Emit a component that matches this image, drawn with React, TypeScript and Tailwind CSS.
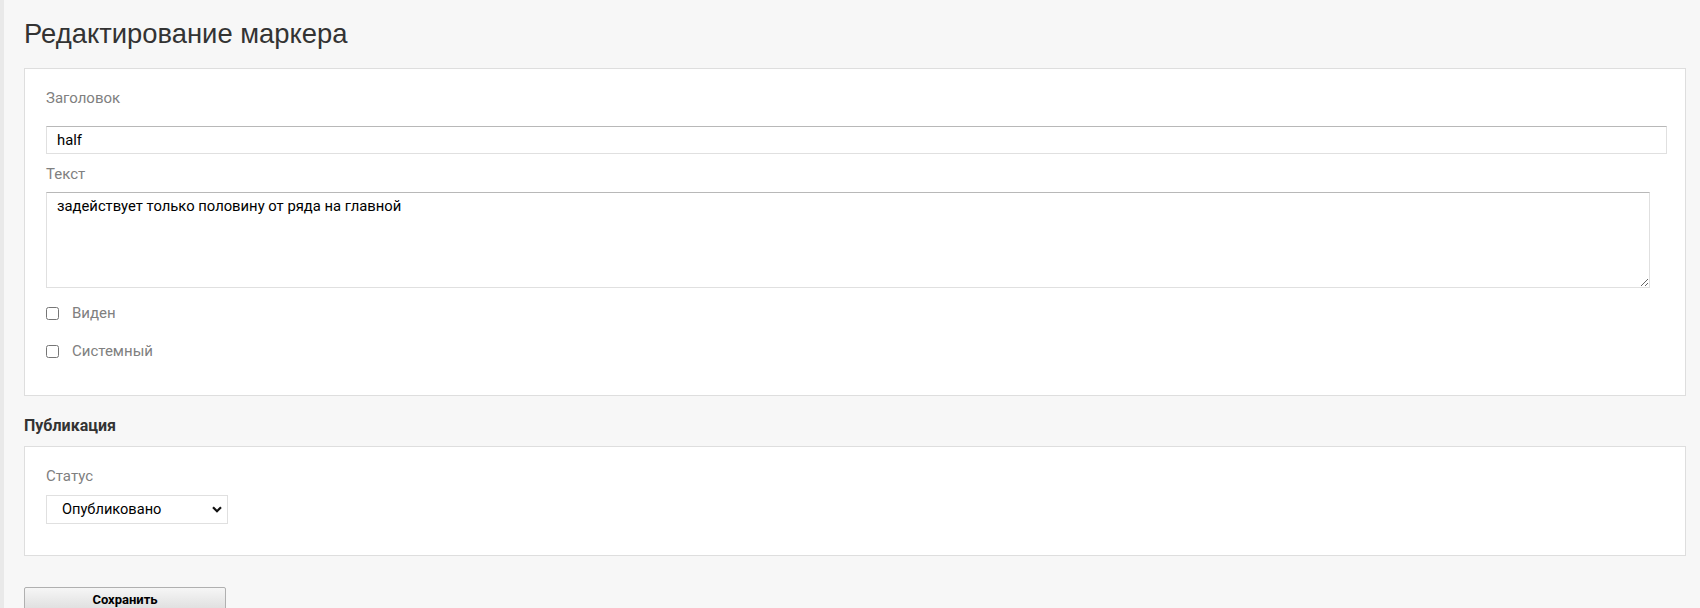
import { useState } from 'react'

/**
 * Страница редактирования маркера: форма с заголовком, текстом,
 * флажками и блоком публикации.
 */

const labelCls = 'block text-[15px] leading-[20px] text-[#808080]'
const fieldCls =
  'block h-[28px] border border-[#e0e0e0] border-t-[#b8b8b8] bg-white px-[10px] text-[14.8px] text-black outline-none'

function Checkbox({ label }: { label: string }) {
  const [checked, setChecked] = useState(false)
  return (
    <label className="flex h-[20px] items-center">
      <input
        type="checkbox"
        checked={checked}
        onChange={e => setChecked(e.target.checked)}
        className="m-0 h-[13px] w-[13px]"
      />
      <span className="ml-[13px] text-[15px] leading-[20px] text-[#808080]">{label}</span>
    </label>
  )
}

export default function App() {
  const [title, setTitle] = useState('half')
  const [text, setText] = useState('задействует только половину от ряда на главной')
  const [status, setStatus] = useState('published')

  return (
    <div className="flex min-h-[608px] bg-[#f7f7f7] font-['Roboto','Liberation_Sans',sans-serif]">
      {/* левая полоса */}
      <div className="w-[4px] shrink-0 bg-[#e9e9e9]" />

      <div className="flex-1 pl-[20px] pr-[14px] pt-[16px]">
        <h1 className="font-['Liberation_Sans','Arial',sans-serif] text-[27.4px] leading-[36px] text-[#333]">
          Редактирование маркера
        </h1>

        {/* Основные поля */}
        <div className="mt-[16px] border border-[#dedede] bg-white pb-[34px] pl-[21px] pr-[18px] pt-[19px]">
          <span className={labelCls}>Заголовок</span>
          <input
            value={title}
            onChange={e => setTitle(e.target.value)}
            className={`${fieldCls} mt-[18px] w-full`}
          />

          <span className={`${labelCls} mt-[10px]`}>Текст</span>
          <textarea
            value={text}
            onChange={e => setText(e.target.value)}
            className="mt-[8px] block h-[96px] w-[calc(100%-17px)] border border-[#e0e0e0] border-t-[#b8b8b8] bg-white px-[10px] py-[4px] text-[14.8px] leading-[18px] text-black outline-none"
          />

          <div className="mt-[15px] flex flex-col gap-[18px]">
            <Checkbox label="Виден" />
            <Checkbox label="Системный" />
          </div>
        </div>

        <h2 className="mt-[20px] text-[16px] font-bold leading-[20px] text-[#333]">Публикация</h2>

        {/* Публикация */}
        <div className="mt-[10px] border border-[#dedede] bg-white pb-[31px] pl-[21px] pt-[19px]">
          <span className={labelCls}>Статус</span>
          <div className="relative mt-[9px] w-[182px]">
            <select
              value={status}
              onChange={e => setStatus(e.target.value)}
              className="block h-[29px] w-full appearance-none border border-[#e0e0e0] bg-white pl-[15px] text-[14.6px] text-black outline-none"
            >
              <option value="published">Опубликовано</option>
              <option value="draft">Черновик</option>
            </select>
            <svg
              className="pointer-events-none absolute right-[6px] top-[11px]"
              width="10"
              height="7"
              viewBox="0 0 10 7"
              fill="none"
              stroke="#111"
              strokeWidth="2.2"
            >
              <path d="M1 1.2l4 4 4-4" />
            </svg>
          </div>
        </div>

        <button className="mt-[31px] block h-[32px] w-[202px] rounded-[2px] border border-[#b0b0b0] bg-gradient-to-b from-[#f6f6f6] to-[#d6d6d6] pb-[6px] text-[13px] font-bold text-black">
          Сохранить
        </button>
      </div>
    </div>
  )
}
